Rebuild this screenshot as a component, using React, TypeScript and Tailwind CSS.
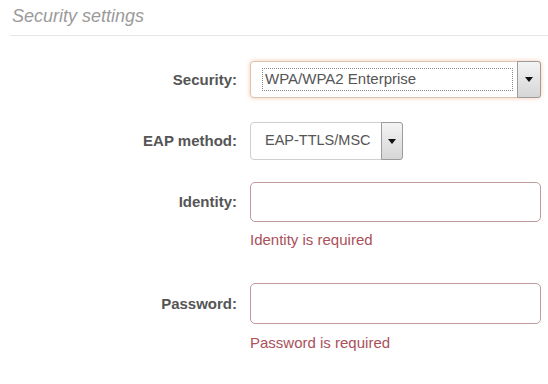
import React from "react";

function Arrow() {
  return (
    <svg width="8" height="5" viewBox="0 0 8 5" className="block">
      <path d="M0 0 L8 0 L4 5 Z" fill="#111" />
    </svg>
  );
}

function Row({ label, children }: { label: string; children: React.ReactNode }) {
  return (
    <div className="flex items-center">
      <div className="w-[237px] shrink-0 text-right text-[15px] font-bold text-[#555] leading-[18px]">
        {label}
      </div>
      <div className="ml-[13px]">{children}</div>
    </div>
  );
}

export default function App() {
  return (
    <div className="w-[548px] h-[384px] bg-white font-['Liberation_Sans',Arial,sans-serif] overflow-hidden">
      <div className="pt-[4px] pl-[12px] text-[18px] italic leading-[24px] text-[#9a9a9a]">
        Security settings
      </div>
      <div className="ml-[10px] mt-[7px] h-px bg-[#e6e6e6]" />

      <div className="mt-[25px]">
        <Row label="Security:">
          <div className="flex h-[37px] w-[291px] rounded-[4px] border border-[#dcc3b4] bg-white shadow-[0_0_4px_rgba(236,150,100,0.55)]">
            <div className="flex flex-1 items-center pl-[11px] pr-[4px]">
              <div className="flex h-[23px] flex-1 items-center border border-dotted border-[#8a8a8a] pl-[2px] text-[15px] text-[#555]">
                WPA/WPA2 Enterprise
              </div>
            </div>
            <div className="-my-px -mr-px flex w-[24px] items-center justify-center rounded-r-[3px] border border-[#9c9c9c] bg-gradient-to-b from-[#f4f4f4] to-[#d6d6d6]">
              <Arrow />
            </div>
          </div>
        </Row>

        <div className="mt-[24px]">
          <Row label="EAP method:">
            <div className="flex h-[38px] w-[153px] rounded-[4px] border border-[#cfcfcf] bg-white">
              <div className="flex flex-1 items-center pl-[14px] text-[14.5px] text-[#555]">EAP-TTLS/MSC</div>
              <div className="-my-px -mr-px flex w-[22px] items-center justify-center rounded-r-[3px] border border-[#9c9c9c] bg-gradient-to-b from-[#f4f4f4] to-[#d6d6d6]">
                <Arrow />
              </div>
            </div>
          </Row>
        </div>

        <div className="mt-[22px]">
          <Row label="Identity:">
            <div className="h-[40px] w-[291px] rounded-[5px] border border-[#c29a9c] bg-white" />
          </Row>
          <div className="ml-[250px] mt-[9px] text-[15px] leading-[18px] text-[#a9505a]">Identity is required</div>
        </div>

        <div className="mt-[34px]">
          <Row label="Password:">
            <div className="h-[41px] w-[291px] rounded-[5px] border border-[#c29a9c] bg-white" />
          </Row>
          <div className="ml-[250px] mt-[10px] text-[15px] leading-[18px] text-[#a9505a]">Password is required</div>
        </div>
      </div>
    </div>
  );
}
